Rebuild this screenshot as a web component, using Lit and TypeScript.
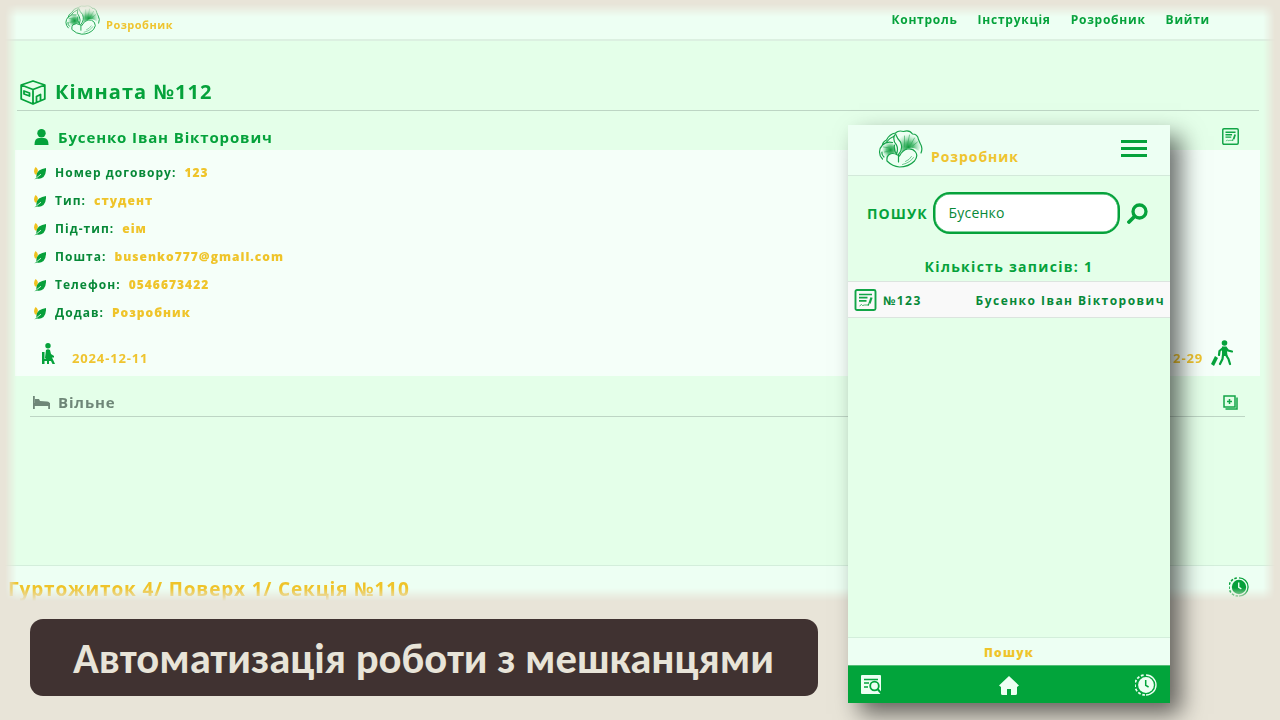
import { LitElement, html, css } from "lit";
import { customElement } from "lit/decorators.js";

const logo = html`<svg class="logo" viewBox="0 0 44 38" fill="none" stroke="#16a34a" stroke-width="1.2" stroke-linecap="round" stroke-linejoin="round">
  <defs>
    <radialGradient id="g1" gradientUnits="userSpaceOnUse" cx="30" cy="17" r="13"><stop offset="0" stop-color="#0f9a3c"/><stop offset=".4" stop-color="#2fae5a" stop-opacity=".75"/><stop offset="1" stop-color="#8fd6a6" stop-opacity="0"/></radialGradient>
    <radialGradient id="g2" gradientUnits="userSpaceOnUse" cx="12" cy="20" r="9"><stop offset="0" stop-color="#0f9a3c"/><stop offset=".45" stop-color="#2fae5a" stop-opacity=".75"/><stop offset="1" stop-color="#8fd6a6" stop-opacity="0"/></radialGradient>
  </defs>
  <path stroke="none" fill="url(#g1)" d="M18 4Q21 1 26 1Q32 1 34 5Q39 5 40 10Q44 16 40 21Q36 17 31 18Q26 19 23 22Q25 14 18 4z"/>
  <path stroke="none" fill="url(#g2)" d="M3 15Q6 12 14 13Q18 17 17 23Q12 23 9 27Q4 27 3 20z"/>
  <path d="M4 15Q4 12 8 10Q11 4 17 3Q20 0 25 1.500Q31 -.5 34 4Q39 4 40 9.500Q41 12 42 14Q44.500 18 42.500 23M4 15Q1 18 1 22Q1 26 4 29M4 15Q8 11 14 12.500M16 6Q11 8 8 12M16 5Q14 11 18 15Q20 19 18 24Q15 20 16 15M17 4Q19 9 22 12Q25 19 20 24.500M20 25V32M19 25Q14 22 10 25Q8 27 8.500 31Q14 36.500 21 37Q30 37 36 31Q40 26 37 22Q34 18 29 19Q24 20 21 26M3.500 22Q3 25 5.500 27"/>
  <path stroke-width=".6" stroke="#2aa855" d="M26 17L26 6M29 15L31 5M32 15L36 8M34 16L39 12M11 18L5 17M11 21L6 22"/>
  <path stroke-width=".6" d="M24 34.500Q32 32.500 35 27.500M27 31.500Q31 30 33 26.500"/>
</svg>`;

const docIcon = html`<svg class="doc" viewBox="0 0 22 22" fill="none" stroke="#12a547"><rect x="1" y="1" width="20" height="20" rx="1.5" stroke-width="1.9"/><path stroke-width="1.7" d="M4.500 5.500H17.500M4.500 8.700H13M4.500 11.800H12"/><path stroke-width="2.300" d="M17 8.500L15 14.500"/><path stroke-width="1.300" d="M14.300 14.500L13.700 16.500"/><path stroke-width=".8" d="M5 17l2-1.500 1 1 2-.5h4"/></svg>`;

const leaf = html`<svg class="leaf" viewBox="0 0 12 13"><path fill="#efc21e" d="M1.500 0Q4.500 2 3.700 5Q3 6 2.500 8Q0 7 0 4.500Q0 2 1.500 0z"/><path fill="#07a03b" d="M12 1Q12.300 7 9.500 10Q6.500 12.500 3 11.500Q2 12.300 .3 12.300Q2 11.500 2.500 10.500Q1.700 6.500 5 3.500Q8 1.600 12 1z"/><path stroke="#f1fff5" stroke-width=".8" d="M2.600 10.700L7 7.200" fill="none"/></svg>`;

const clock = (fg: string, bg: string) => html`<svg class="clock" viewBox="0 0 22 22" fill="none" stroke="${fg}"><circle cx="11" cy="11" r="7.900" fill="${fg}" stroke="none"/><path stroke-width="1.400" d="M11 1A10 10 0 0 1 11 21"/><path stroke-width="1.700" stroke-dasharray="2.800 1.700" d="M10 21A10 10 0 0 1 10 1"/><path stroke="${bg}" stroke-width="1.500" d="M10.700 6V11.300L13.600 13"/></svg>`;

const rows: [string, string][] = [
  ["Номер договору:", "123"],
  ["Тип:", "студент"],
  ["Під-тип:", "еім"],
  ["Пошта:", "busenko777@gmail.com"],
  ["Телефон:", "0546673422"],
  ["Додав:", "Розробник"],
];

@customElement("app-root")
export class AppRoot extends LitElement {
  static styles = css`
    :host { display: block; position: relative; width: 1280px; height: 720px; overflow: hidden; background: #e8e4d8; font-family: "Open Sans", "Noto Sans", sans-serif; font-weight: 700; color: #05a23b; white-space: nowrap; }
    * { box-sizing: border-box; }
    svg { display: block; flex: none; }
    .desk { height: 604px; padding: 0 6px; display: flex; flex-direction: column; background: #e4ffe9;
      mask-image: linear-gradient(90deg, transparent 5px, #000 17px, #000 1263px, transparent 1275px), linear-gradient(transparent 4px, #000 17px, #000 588px, transparent 601px);
      mask-composite: intersect; }
    .top { height: 41px; margin: 0 -6px; padding: 0 70px 0 65px; display: flex; justify-content: space-between; background: #edfff3; border-bottom: 2px solid #dcf0e1; }
    .brand { display: flex; }
    .brand .logo { width: 35px; height: 30px; margin-top: 5px; }
    .brand span { color: #efc42f; font-size: 11px; letter-spacing: .5px; line-height: 16px; margin: 17px 0 0 6px; }
    .nav { display: flex; gap: 20px; font-size: 12px; font-weight: 700; letter-spacing: .75px; line-height: 20px; padding-top: 10px; }
    .title { height: 70px; margin: 0 15px 0 11px; padding: 0 0 5px 4px; display: flex; align-items: flex-end; gap: 8px; border-bottom: 1px solid #bdd5c4; }
    .title svg { margin-left: -1px; margin-right: 1px; }
    .title span { font-size: 20px; letter-spacing: 1.05px; line-height: 27px; }
    .person { height: 39px; display: flex; align-items: center; padding: 12px 35px 0 28px; }
    .person span { font-size: 15px; letter-spacing: .87px; margin-left: 9px; flex: 1; }
    .person .doc { width: 17px; height: 17px; }
    .card { height: 226px; margin: 0 14px 0 9px; padding: 8px 27px 0 19px; background: #f5fff9; }
    .row { display: flex; height: 28px; align-items: center; font-size: 12px; letter-spacing: 1.03px; color: #078938; }
    .leaf { width: 12px; height: 13px; margin: 3px 9px 0 0; }
    .row b { color: #efc42a; margin-left: 8px; font-weight: 800; }
    .dates { height: 38px; margin-top: 9px; display: flex; align-items: center; justify-content: space-between; color: #efc42f; font-size: 13px; font-weight: 700; letter-spacing: .85px; padding-left: 8px; }
    .dates div { display: flex; align-items: center; }
    .dates span { line-height: 20px; padding-top: 7px; }
    .in span { margin-left: 16px; }
    .out span { margin-right: 8px; }
    .out svg { margin-top: -3px; }
    .free { height: 41px; margin: 0 29px 0 24px; border-bottom: 1px solid #bdd5c4; display: flex; align-items: center; padding: 12px 7px 0 3px; color: #6f8778; }
    .free span { font-size: 15px; letter-spacing: .85px; margin-left: 8px; flex: 1; }
    .space { flex: 1; }
    .path { height: 39px; margin: 0 -6px; border-top: 1px solid #d3eedb; background: #edfff3; display: flex; justify-content: space-between; padding: 10px 31px 0 8px; color: #efc42a; font-size: 19px; letter-spacing: .86px; line-height: 26px; }
    .path .clock { width: 20px; height: 20px; margin-top: 1px; }
    .banner { margin: 15px 0 0 30px; width: 788px; height: 77px; border-radius: 13px; background: #403231; color: #e8e4d8; display: flex; align-items: center; justify-content: center; font-family: Carlito, Lato, sans-serif; font-size: 42.700px; line-height: 50px; padding: 0 1px 0 0; }
    .phone { position: absolute; left: 848px; top: 125px; width: 322px; height: 578px; background: #e4ffe9; box-shadow: 11px 11px 22px rgba(0,0,0,.57); display: flex; flex-direction: column; }
    .phead { height: 51px; display: flex; border-bottom: 1px solid #d3e9da; background: #edfff3; padding: 0 23px 0 30px; justify-content: space-between; }
    .phead .logo { width: 45px; height: 38px; margin-top: 5px; }
    .phead .brand span { font-size: 14px; font-weight: 700; letter-spacing: .93px; line-height: 20px; margin: 22px 0 0 8px; }
    .burger { width: 26px; padding-top: 15px; display: flex; flex-direction: column; gap: 4.500px; }
    .burger i { height: 2.500px; background: #05a23b; }
    .search { margin-top: 16px; height: 42px; padding: 0 21px 0 19px; display: flex; align-items: center; }
    .search label { width: 66px; font-size: 14px; font-weight: 700; letter-spacing: 1.1px; }
    .field { width: 187px; height: 42px; border: 2px solid #05a23b; box-shadow: inset 0 0 0 .5px #05a23b; border-radius: 17px; background: #fff; padding: 9px 13.500px; font-size: 14px; line-height: 20px; font-weight: 500; color: #078938; margin-right: 7px; letter-spacing: .2px; }
    .count { height: 47px; padding-top: 23px; text-align: center; font-size: 14px; letter-spacing: 1.3px; line-height: 20px; }
    .record { height: 37px; background: #f9f9f9; border: 1px solid #dce4df; border-width: 1px 0; display: flex; align-items: center; padding: 0 5px 0 6px; color: #078938; font-size: 12px; letter-spacing: 1.46px; }
    .record .doc { width: 23px; height: 22px; margin-right: 6px; }
    .record span { flex: 1; padding-top: 2px; }
    .record div { padding-top: 2px; }
    .label { height: 28px; background: #edfff3; border-top: 1px solid #d3eedb; color: #efc42a; font-size: 12px; font-weight: 800; letter-spacing: 1.2px; text-align: center; line-height: 29px; }
    .bar { height: 38px; background: #02a43b; display: flex; align-items: center; justify-content: space-between; padding: 1px 13px 0 12px; border-top: 1px solid #54bd77; }
    .bar .clock { width: 22px; height: 22px; }
  `;

  render() {
    return html`
      <div class="desk">
        <div class="top"><div class="brand">${logo}<span>Розробник</span></div>
          <div class="nav"><span>Контроль</span><span>Інструкція</span><span>Розробник</span><span>Вийти</span></div></div>
        <div class="title">
          <svg width="26" height="26" viewBox="0 0 26 26" fill="none" stroke="#05a23b" stroke-width="1.800" stroke-linejoin="round"><path d="M1.200 6L13 2L24.800 6V20L13 25L1.200 20zM1.200 6L13 10.500L24.800 6M13 10.500V25M4 12L9.500 14V17L4 15zM16.500 23V17.500L20.500 15.500V21.500"/></svg>
          <span>Кімната №112</span></div>
        <div class="person">
          <svg width="15" height="16" viewBox="0 0 15 16" fill="#05a23b"><circle cx="7.500" cy="4.200" r="4.200"/><path d="M.5 16Q.5 9 5 9H10Q14.500 9 14.500 16z"/></svg>
          <span>Бусенко Іван Вікторович</span>${docIcon}</div>
        <div class="card">
          ${rows.map(([k, v]) => html`<div class="row">${leaf}<span>${k}</span><b>${v}</b></div>`)}
          <div class="dates">
            <div class="in"><svg width="14" height="22" viewBox="0 0 14 22" fill="#05a23b"><circle cx="6" cy="2.800" r="2.700"/><path d="M0 9H2.500V16H9V18H2.500V21H0zM4 7Q6 5.500 8 7L9 11L12 13V14.500H10L13 21H10.500L8.500 17H7V21H5V17L3 15z"/></svg><span>2024-12-11</span></div>
            <div class="out"><span>2024-12-29</span><svg width="22" height="26" viewBox="0 0 22 26" fill="none" stroke="#05a23b" stroke-width="2.200" stroke-linecap="round" stroke-linejoin="round"><circle cx="13.500" cy="3" r="2.800" fill="#05a23b" stroke="none"/><path fill="#05a23b" stroke="none" d="M11 6.500H15.500L16.500 16H11z"/><path d="M12 8L8.500 11L8 15M15 8L17 10.500L21 11.500M12 15L11.500 19L9 24M15 15L17.500 19L19 24"/><path fill="#05a23b" stroke="none" d="M4 16L7 18L3 26L0 24z"/></svg></div>
          </div>
        </div>
        <div class="free">
          <svg width="17" height="13" viewBox="0 0 17 13" fill="#6f8778"><path d="M0 0H1.800V7H17V13H15.200V10H1.800V13H0z"/><path d="M2 3H6L7 5L14 5.500Q17 6 17 8H2z"/></svg>
          <span>Вільне</span>
          <svg width="15" height="15" viewBox="0 0 15 15" fill="none" stroke="#12a547" stroke-width="1.500"><path d="M1 1H12V12H1zM14 2.500V14H2.500M6.500 4V9M4 6.500H9"/></svg></div>
        <div class="space"></div>
        <div class="path"><span>Гуртожиток 4/ Поверх 1/ Секція №110</span>${clock("#07a03b", "#edfff3")}</div>
      </div>
      <div class="banner">Автоматизація роботи з мешканцями</div>
      <div class="phone">
        <div class="phead"><div class="brand">${logo}<span>Розробник</span></div><div class="burger"><i></i><i></i><i></i></div></div>
        <div class="search"><label>ПОШУК</label><div class="field">Бусенко</div>
          <svg width="21" height="21" viewBox="0 0 21 21" fill="none" stroke="#05a23b" stroke-linecap="round"><circle cx="12.500" cy="8.500" r="6.500" stroke-width="3.300"/><path stroke-width="3.800" d="M7.500 13.500L2 19"/></svg></div>
        <div class="count">Кількість записів: 1</div>
        <div class="record">${docIcon}<span>№123</span><div>Бусенко Іван Вікторович</div></div>
        <div class="space"></div>
        <div class="label">Пошук</div>
        <div class="bar">
          <svg width="22" height="20" viewBox="0 0 22 20"><rect x="1" y="0" width="20" height="19" rx="1" fill="#edfff3"/><path fill="none" stroke="#02a43b" stroke-width="1.400" d="M4 4.500H18M4 8H9M4 12H8"/><circle cx="14.500" cy="11" r="4.300" fill="#edfff3" stroke="#02a43b" stroke-width="1.800"/><path d="M17.500 14L21.500 18.500" stroke="#02a43b" stroke-width="2"/></svg>
          <svg width="20" height="19" viewBox="0 0 20 19" fill="#edfff3"><path d="M10 0L20 9.500L18 11V17.500Q18 19 16.500 19H12V13H8V19H3.500Q2 19 2 17.500V11L0 9.500z"/></svg>
          ${clock("#edfff3", "#02a43b")}
        </div>
      </div>`;
  }
}
